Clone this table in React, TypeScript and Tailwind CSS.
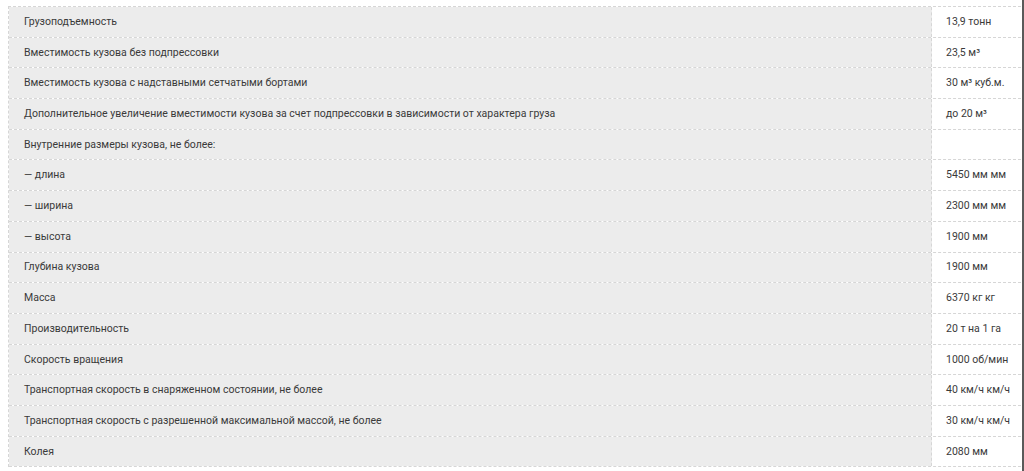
const rows: [string, string][] = [
  ['Грузоподъемность', '13,9 тонн'],
  ['Вместимость кузова без подпрессовки', '23,5 м³'],
  ['Вместимость кузова с надставными сетчатыми бортами', '30 м³ куб.м.'],
  ['Дополнительное увеличение вместимости кузова за счет подпрессовки в зависимости от характера груза', 'до 20 м³'],
  ['Внутренние размеры кузова, не более:', ''],
  ['— длина', '5450 мм мм'],
  ['— ширина', '2300 мм мм'],
  ['— высота', '1900 мм'],
  ['Глубина кузова', '1900 мм'],
  ['Масса', '6370 кг кг'],
  ['Производительность', '20 т на 1 га'],
  ['Скорость вращения', '1000 об/мин'],
  ['Транспортная скорость в снаряженном состоянии, не более', '40 км/ч км/ч'],
  ['Транспортная скорость с разрешенной максимальной массой, не более', '30 км/ч км/ч'],
  ['Колея', '2080 мм'],
];

export default function App() {
  return (
    <div className="h-[471px] w-[1024px] overflow-hidden bg-white border-r-2 border-[#5a5a5a] pt-[6px] pl-[8px] pr-[1px] font-['Roboto',sans-serif] text-[10.5px] text-[#3a3a3a]">
      <div className="border-l border-t border-dashed border-[#d6d6d6]">
        {rows.map(([name, value], i) => (
          <div key={i} className="flex h-[30.7px] border-b border-dashed border-[#d6d6d6]">
            <div className="flex flex-1 items-center bg-[#ececec] pl-[15px] border-r border-dashed border-[#d6d6d6]">
              {name}
            </div>
            <div className="flex w-[89px] items-center pl-[14px]">{value}</div>
          </div>
        ))}
      </div>
    </div>
  );
}
